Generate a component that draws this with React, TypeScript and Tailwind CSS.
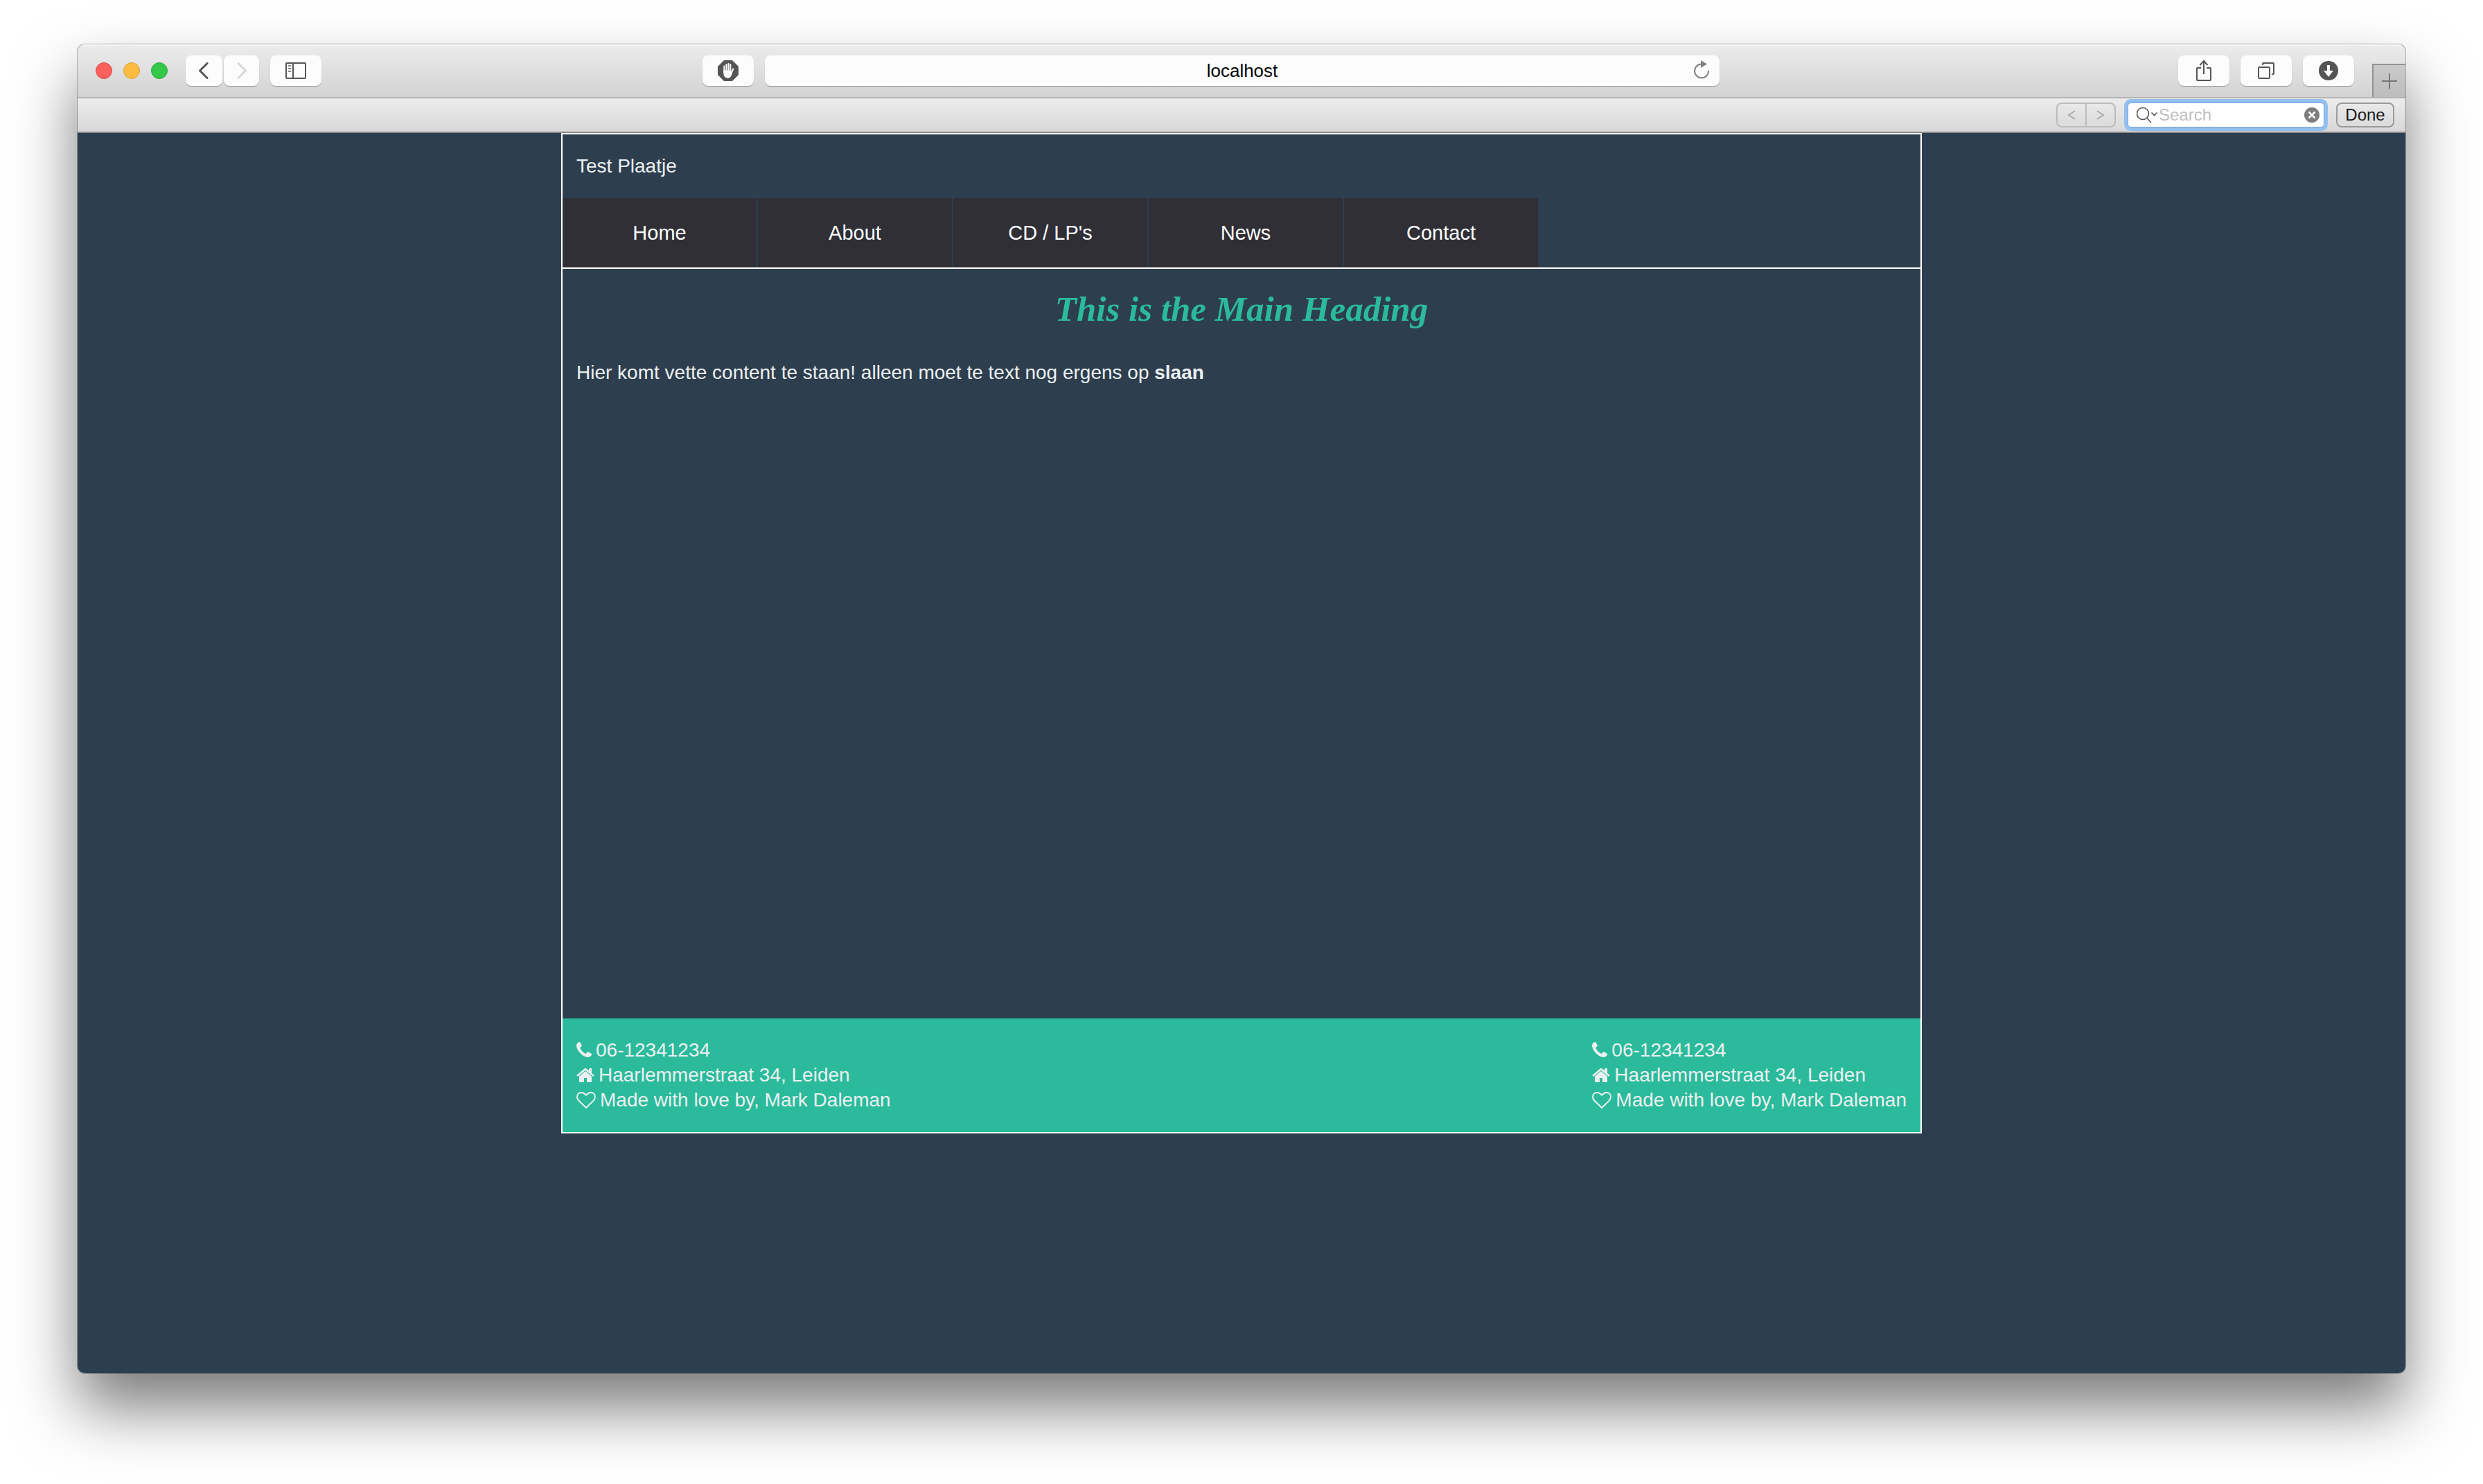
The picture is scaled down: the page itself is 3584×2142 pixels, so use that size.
import React from "react";

const toolButton =
  "flex h-11 items-center justify-center rounded-lg bg-[#fcfcfc] shadow-[0_1px_1px_rgba(0,0,0,0.3)]";

const navItems = ["Home", "About", "CD / LP's", "News", "Contact"];

function PhoneIcon() {
  return (
    <svg className="h-7 w-[22px]" viewBox="192 0 1408 1792" fill="currentColor" aria-hidden="true">
      <path d="M1600 1240q0 27-10 70.5t-21 68.5q-21 50-122 106-94 51-186 51-27 0-53-3.5t-57.5-12.5-47-14.5-55.5-20.5-49-18q-98-35-175-83-127-79-264-216t-216-264q-48-77-83-175-3-9-18-49t-20.5-55.5-14.5-47-12.5-57.5-3.5-53q0-92 51-186 56-101 106-122 25-11 68.5-21t70.5-10q14 0 21 3 18 6 53 76 11 19 30 54t35 63.5 31 53.5q3 4 17.5 25t21.5 35.5 7 28.5q0 20-28.5 50t-62 55-62 53-28.5 46q0 9 5 22.5t8.5 20.5 14 24 11.5 19q76 137 174 235t235 174q2 1 19 11.5t24 14 20.5 8.5 22.5 5q18 0 46-28.5t53-62 55-62 50-28.5q14 0 28.5 7t35.5 21.5 25 17.5q25 15 53.5 31t63.5 35 54 30q70 35 76 53 3 7 3 21z" />
    </svg>
  );
}

function HomeIcon() {
  return (
    <svg className="h-7 w-[26px]" viewBox="64 0 1664 1792" fill="currentColor" aria-hidden="true">
      <path d="M1472 992v480q0 26-19 45t-45 19h-384v-384h-256v384h-384q-26 0-45-19t-19-45v-480q0-1 .5-3t.5-3l575-474 575 474q1 2 1 6zm223-69l-62 74q-8 9-21 11h-3q-13 0-21-7l-692-577-692 577q-12 8-24 7-13-2-21-11l-62-74q-8-10-7-23.5t11-21.5l719-599q32-26 76-26t76 26l244 204v-195q0-14 9-23t23-9h192q14 0 23 9t9 23v408l219 182q10 8 11 21.5t-7 23.5z" />
    </svg>
  );
}

function HeartIcon() {
  return (
    <svg className="size-7" viewBox="0 0 1792 1792" fill="currentColor" aria-hidden="true">
      <path d="M1664 596q0-81-21.5-143t-55-98.5-81.5-59.5-94-31-98-8-112 25.5-110.5 64-86.5 72-60 61.5q-18 22-49 22t-49-22q-24-28-60-61.5t-86.5-72-110.5-64-112-25.5-98 8-94 31-81.5 59.5-55 98.5-21.5 143q0 168 187 355l581 560 580-559q188-188 188-356zm128 0q0 221-229 450l-623 600q-18 18-44 18t-44-18l-624-602q-10-8-27.5-26t-55.5-65.5-68-97.5-53.5-121-23.5-138q0-220 127-344t351-124q62 0 126.5 21.5t120 58 95.5 68.5 76 68q36-36 76-68t95.5-68.5 120-58 126.5-21.5q224 0 351 124t127 344z" />
    </svg>
  );
}

function Toolbar() {
  return (
    <div className="grid h-[78px] grid-cols-[902fr_1468fr_990fr] border-b-2 border-[#b4b4b4] bg-linear-to-b from-[#ececec] to-[#d3d3d3] shadow-[inset_0_2px_0_#f5f5f5]">
      <div className="flex items-center pl-[26px]">
        <div className="flex gap-4">
          <button aria-label="Close" className="size-6 rounded-full border border-[#e2463f] bg-[#fc615d]" />
          <button aria-label="Minimize" className="size-6 rounded-full border border-[#dea035] bg-[#fdbc40]" />
          <button aria-label="Zoom" className="size-6 rounded-full border border-[#27aa35] bg-[#34c749]" />
        </div>
        <div className="ml-[26px] flex gap-0.5">
          <button aria-label="Back" className={toolButton + " w-[53px]"}>
            <svg className="h-6 w-4" viewBox="0 0 16 24" fill="none" stroke="#555" strokeWidth="3" strokeLinecap="round" strokeLinejoin="round">
              <path d="M12 1.500 1.500 12 12 22.500" />
            </svg>
          </button>
          <button aria-label="Forward" className={toolButton + " w-[51px]"}>
            <svg className="h-6 w-4" viewBox="0 0 16 24" fill="none" stroke="#d8d8d8" strokeWidth="3" strokeLinecap="round" strokeLinejoin="round">
              <path d="M3 1.500 13.500 12 3 22.500" />
            </svg>
          </button>
        </div>
        <button aria-label="Show sidebar" className={toolButton + " ml-4 w-[74px]"}>
          <svg className="h-6 w-[30px]" viewBox="0 0 30 24" fill="none" stroke="#555" strokeWidth="2">
            <rect x="1" y="1" width="28" height="22" rx="1" />
            <path d="M11 1v22" />
            <path d="M4 5h4M4 9h4M4 13h4" stroke="#888" />
          </svg>
        </button>
      </div>

      <div className="flex items-center gap-4">
        <button aria-label="Content blocker" className={toolButton + " w-[74px] shrink-0"}>
          <svg className="size-[30px]" viewBox="0 0 30 30">
            <path d="M9 0h12l9 9v12l-9 9H9l-9-9V9z" fill="#555" />
            <path
              d="M9.300 8.500V17M12.400 6V16M15.400 5V16M18.300 6V16M22.300 12.300 19.500 19"
              fill="none"
              stroke="#fcfcfc"
              strokeWidth="2"
              strokeLinecap="round"
            />
            <path d="M8.300 14.500h11v3l1.700-1-.6 3.500c-.9 3.700-2.700 5.800-5.800 5.800-3.600 0-6.300-2.800-6.300-7z" fill="#fcfcfc" />
          </svg>
        </button>
        <div className="relative flex h-11 min-w-0 flex-1">
          <input
            aria-label="Address"
            defaultValue="localhost"
            className="h-11 w-full rounded-lg bg-[#fcfcfc] text-center text-[26px] leading-8 text-black shadow-[0_1px_1px_rgba(0,0,0,0.3)] outline-none"
          />
          <button aria-label="Reload" className="absolute top-[7px] right-[14px]">
            <svg className="h-7 w-6" viewBox="0 0 24 28" fill="none" stroke="#808080" strokeWidth="2">
              <path d="M22 15A10 10 0 1 1 12 5.500" />
              <path d="M11 0v11l9-5.500z" fill="#808080" stroke="none" />
            </svg>
          </button>
        </div>
      </div>

      <div className="flex items-center justify-end">
        <div className="flex gap-4">
          <button aria-label="Share" className={toolButton + " w-[74px]"}>
            <svg className="h-8 w-6" viewBox="0 0 24 32" fill="none" stroke="#555" strokeWidth="2">
              <path d="M8 12H3a1 1 0 0 0-1 1v16a1 1 0 0 0 1 1h18a1 1 0 0 0 1-1V13a1 1 0 0 0-1-1h-5" />
              <path d="M12 21V2M6.500 8 12 2l5.500 6" />
            </svg>
          </button>
          <button aria-label="Show all tabs" className={toolButton + " w-[74px]"}>
            <svg className="h-6 w-6" viewBox="0 0 24 24" fill="none" stroke="#555" strokeWidth="2">
              <rect x="1" y="7" width="16" height="16" rx="1.500" />
              <path d="M7 4V2a1 1 0 0 1 1-1h14a1 1 0 0 1 1 1v14a1 1 0 0 1-1 1h-2" />
            </svg>
          </button>
          <button aria-label="Downloads" className={toolButton + " w-[74px]"}>
            <svg className="size-7" viewBox="0 0 28 28">
              <circle cx="14" cy="14" r="14" fill="#555" />
              <path d="M12 6h4v8h5l-7 9-7-9h5z" fill="#fcfcfc" />
            </svg>
          </button>
        </div>
        <button
          aria-label="New tab"
          className="ml-[26px] flex h-12 w-12 items-center justify-center self-end border-t-2 border-l-2 border-[#929292] bg-linear-to-b from-[#cacaca] to-[#bdbdbd]"
        >
          <svg className="size-[22px]" viewBox="0 0 22 22" stroke="#777" strokeWidth="2">
            <path d="M11 0v22M0 11h22" />
          </svg>
        </button>
      </div>
    </div>
  );
}

function FindBar() {
  return (
    <div className="flex h-[50px] items-center justify-end border-b-2 border-[#8a8a8a] bg-linear-to-b from-[#ececec] to-[#d8d8d8] pr-4">
      <div className="flex h-9 w-[86px] rounded-lg border-2 border-[#bcbcbc]">
        <button aria-label="Previous match" className="flex flex-1 items-center justify-center border-r-2 border-[#bcbcbc]">
          <svg className="h-[14px] w-3" viewBox="0 0 12 14" fill="none" stroke="#aaa" strokeWidth="2">
            <path d="M11 1 2 7l9 6" />
          </svg>
        </button>
        <button aria-label="Next match" className="flex flex-1 items-center justify-center">
          <svg className="h-[14px] w-3" viewBox="0 0 12 14" fill="none" stroke="#aaa" strokeWidth="2">
            <path d="M1 1l9 6-9 6" />
          </svg>
        </button>
      </div>
      <label className="ml-[18px] flex h-[34px] w-[282px] items-center rounded-sm bg-white pl-3 pr-1.5 shadow-[0_0_0_1px_#6fa3dc,0_0_0_6px_#93c0f0]">
        <svg className="h-6 w-8 shrink-0" viewBox="0 0 32 24" fill="none" stroke="#555" strokeWidth="1.600">
          <circle cx="9" cy="10" r="8.500" />
          <path d="M14.500 16 21 23M21.500 8.500l4 4 4-4" />
        </svg>
        <input
          aria-label="Search"
          placeholder="Search"
          className="min-w-0 flex-1 bg-transparent text-2xl leading-8 text-black outline-none placeholder:text-[#bfbfbf]"
        />
        <button aria-label="Clear search">
          <svg className="size-[22px]" viewBox="0 0 22 22">
            <circle cx="11" cy="11" r="11" fill="#7d7d7d" />
            <path d="M6.500 6.500l9 9M15.500 6.500l-9 9" stroke="#fff" strokeWidth="2.500" />
          </svg>
        </button>
      </label>
      <button className="ml-[18px] flex h-9 w-[84px] items-center justify-center rounded-lg border-2 border-[#9a9a9a] text-2xl leading-8 text-[#1a1a1a]">
        Done
      </button>
    </div>
  );
}

function ContactInfo() {
  return (
    <ul className="leading-9">
      <li className="flex items-center gap-1.5">
        <PhoneIcon />
        06-12341234
      </li>
      <li className="flex items-center gap-1.5">
        <HomeIcon />
        Haarlemmerstraat 34, Leiden
      </li>
      <li className="flex items-center gap-1.5">
        <HeartIcon />
        Made with love by, Mark Daleman
      </li>
    </ul>
  );
}

export default function App() {
  return (
    <div className="flex min-h-screen flex-col overflow-hidden bg-white px-28 pt-16 pb-40 font-['Liberation_Sans',Arial,sans-serif]">
      <div className="flex flex-1 flex-col rounded-[10px] shadow-[0_0_0_1px_rgba(0,0,0,0.25),0_50px_90px_rgba(0,0,0,0.52)]">
        <div className="flex flex-1 flex-col overflow-hidden rounded-[10px] bg-[#2d3e4e]">
          <Toolbar />
          <FindBar />
          <div className="mx-auto w-full max-w-[1964px] border-2 border-white text-[28px] leading-9 text-[#ecf0f1]">
            <header className="border-b-2 border-white">
              <p className="px-5 py-7">Test Plaatje</p>
              <nav className="flex gap-0.5">
                {navItems.map((item) => (
                  <a key={item} href="#" className="w-[280px] bg-[#2f2f35] py-8 text-center text-[29px] leading-9 text-white">
                    {item}
                  </a>
                ))}
              </nav>
            </header>
            <main className="min-h-[1082px] px-5 pt-5">
              <h1 className="text-center font-['Liberation_Serif',serif] text-[51px] leading-[76px] font-bold text-[#2bbb9c] italic">
                This is the Main Heading
              </h1>
              <p className="mt-9">
                Hier komt vette content te staan! alleen moet te text nog ergens op <strong>slaan</strong>
              </p>
            </main>
            <footer className="flex justify-between bg-[#2bbb9c] px-5 py-7">
              <ContactInfo />
              <ContactInfo />
            </footer>
          </div>
        </div>
      </div>
    </div>
  );
}
